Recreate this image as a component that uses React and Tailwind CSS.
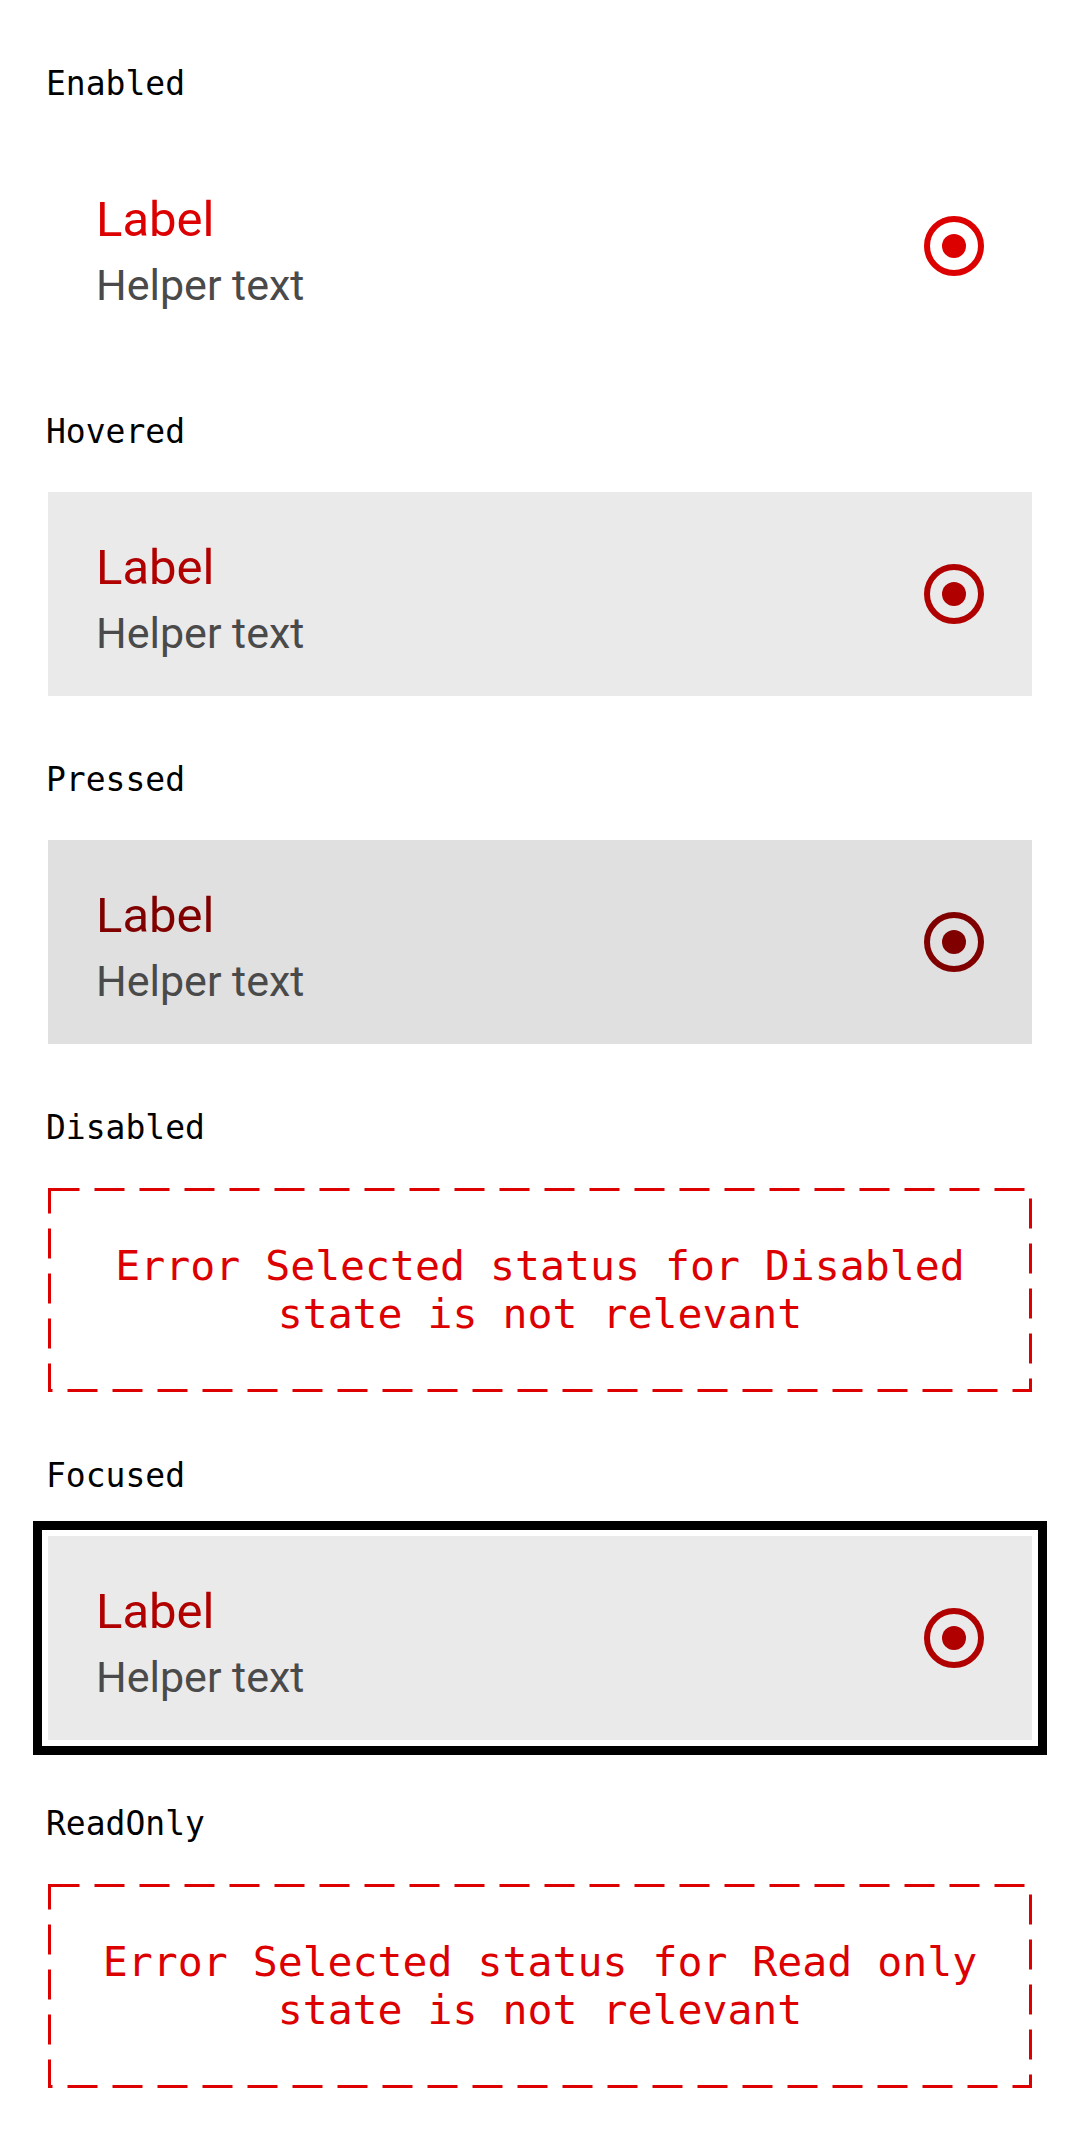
import React from "react";

function SectionLabel({ children }) {
  return (
    <div className="h-[40px] pl-[46px] text-[33px] leading-[40px] text-black font-['DejaVu_Sans_Mono',monospace] whitespace-pre">
      {children}
    </div>
  );
}

function Radio({ ring, dot }) {
  return (
    <div className={`self-center ml-auto w-[60px] h-[60px] rounded-full border-[6px] ${ring} flex items-center justify-center`}>
      <div className={`w-[24px] h-[24px] rounded-full ${dot}`} />
    </div>
  );
}

function Item({ bg, labelColor, ring, dot, focused }) {
  return (
    <div
      className={`flex h-[204px] w-[984px] pl-[48px] pr-[48px] ${bg} ${
        focused ? "outline-[9px] outline-solid outline-black outline-offset-[6px]" : ""
      }`}
    >
      <div className="flex flex-col pt-[48px] font-['Roboto',sans-serif]">
        <span className={`text-[49px] leading-[56px] ${labelColor}`}>Label</span>
        <span className="mt-[12px] text-[43px] leading-[50px] text-[#4a4a4a]">Helper text</span>
      </div>
      <Radio ring={ring} dot={dot} />
    </div>
  );
}

function ErrorBox({ children }) {
  return (
    <div className="relative flex h-[204px] w-[984px] items-center justify-center px-[40px]">
      <svg
        className="absolute inset-0 pointer-events-none"
        width="984"
        height="204"
        viewBox="0 0 984 204"
      >
        <rect
          x="1.5"
          y="1.5"
          width="981"
          height="201"
          fill="none"
          stroke="#dc0000"
          strokeWidth="3"
          strokeDasharray="30 15"
        />
      </svg>
      <p className="text-center text-[41.5px] leading-[48px] text-[#dc0000] font-['DejaVu_Sans_Mono',monospace]">
        {children}
      </p>
    </div>
  );
}

function Section({ title, children }) {
  return (
    <div className="flex flex-col gap-[40px]">
      <SectionLabel>{title}</SectionLabel>
      <div className="pl-[48px]">{children}</div>
    </div>
  );
}

export default function App() {
  return (
    <div className="w-[1080px] min-h-[2136px] bg-white pt-[64px] pb-[48px] flex flex-col gap-[64px]">
      <Section title="Enabled">
        <Item bg="bg-white" labelColor="text-[#dc0000]" ring="border-[#dc0000]" dot="bg-[#dc0000]" />
      </Section>
      <Section title="Hovered">
        <Item bg="bg-[#eaeaea]" labelColor="text-[#b00000]" ring="border-[#b00000]" dot="bg-[#b00000]" />
      </Section>
      <Section title="Pressed">
        <Item bg="bg-[#e0e0e0]" labelColor="text-[#800000]" ring="border-[#800000]" dot="bg-[#800000]" />
      </Section>
      <Section title="Disabled">
        <ErrorBox>Error Selected status for Disabled state is not relevant</ErrorBox>
      </Section>
      <Section title="Focused">
        <Item bg="bg-[#eaeaea]" labelColor="text-[#b00000]" ring="border-[#b00000]" dot="bg-[#b00000]" focused />
      </Section>
      <Section title="ReadOnly">
        <ErrorBox>Error Selected status for Read only state is not relevant</ErrorBox>
      </Section>
    </div>
  );
}
